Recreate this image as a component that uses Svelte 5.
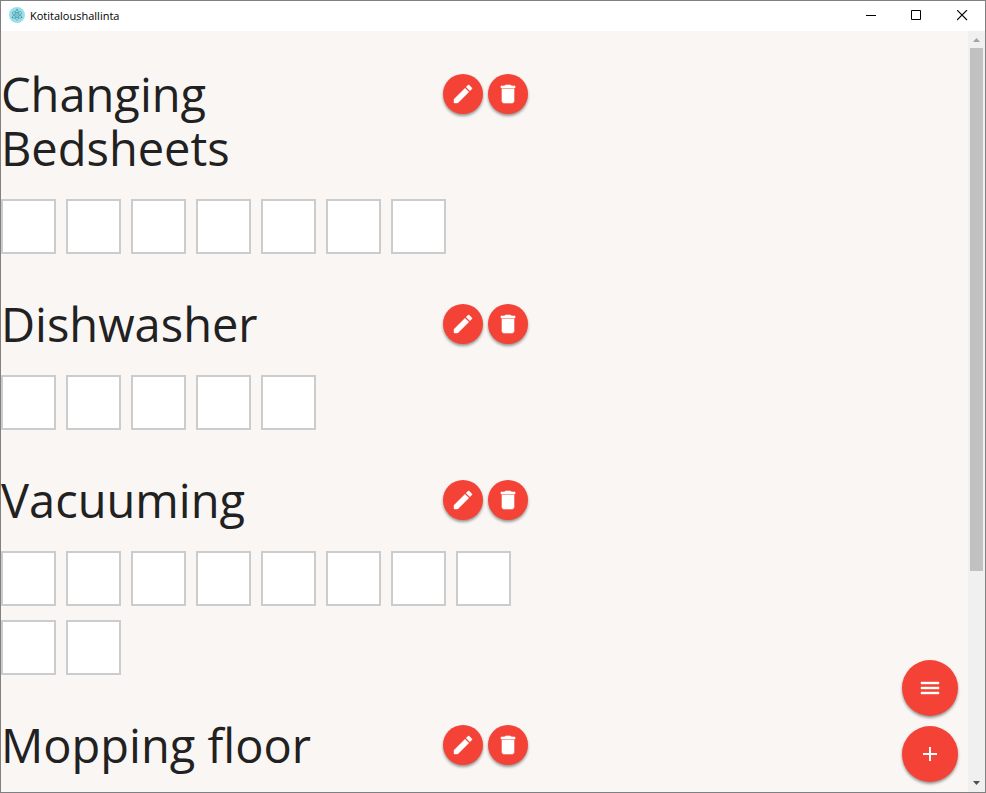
<script>
  const tasks = [
    { name: 'Changing Bedsheets', count: 7 },
    { name: 'Dishwasher', count: 5 },
    { name: 'Vacuuming', count: 10 },
    { name: 'Mopping floor', count: 6 }
  ];
</script>

<div class="window">
  <header class="titlebar">
    <svg class="logo" viewBox="0 0 16 17" width="16" height="17" aria-hidden="true">
      <circle cx="8" cy="8" r="8" fill="#98e1ec" />
      <g fill="none" stroke="#47848f" stroke-width="0.6" opacity="0.85">
        <ellipse cx="8" cy="8" rx="5.2" ry="2" transform="rotate(30 8 8)" />
        <ellipse cx="8" cy="8" rx="5.2" ry="2" transform="rotate(90 8 8)" />
        <ellipse cx="8" cy="8" rx="5.2" ry="2" transform="rotate(150 8 8)" />
      </g>
      <circle cx="8" cy="8" r="0.7" fill="#47848f" />
      <circle cx="3.4" cy="10.4" r="0.7" fill="#47848f" />
      <circle cx="12.6" cy="10.4" r="0.7" fill="#47848f" />
      <circle cx="8" cy="2.8" r="0.7" fill="#47848f" />
    </svg>
    <span class="caption">Kotitaloushallinta</span>
    <button class="control" aria-label="Minimize">
      <svg viewBox="0 0 11 11" width="11" height="11"><path d="M1 5.500h10" stroke="#000" /></svg>
    </button>
    <button class="control" aria-label="Maximize">
      <svg viewBox="0 0 11 11" width="11" height="11"><path d="M.5.5h9v9h-9z" fill="none" stroke="#000" /></svg>
    </button>
    <button class="control" aria-label="Close">
      <svg viewBox="0 0 11 11" width="11" height="11"><path d="M0 0l10 10M10 0l-10 10" stroke="#000" stroke-width="1.1" /></svg>
    </button>
  </header>

  <div class="body">
    <main class="content">
      {#each tasks as task}
        <section class="task">
          <div class="heading">
            <h2>{task.name}</h2>
            <div class="actions">
              <button class="fab small" aria-label="Edit {task.name}">
                <svg viewBox="0 0 24 24" width="24" height="24"><path d="M3 17.25V21h3.75L17.81 9.94l-3.75-3.75L3 17.25zM20.71 7.04c.39-.39.39-1.02 0-1.41l-2.34-2.34c-.39-.39-1.02-.39-1.41 0l-1.83 1.83 3.75 3.75 1.83-1.83z" stroke="#fff" stroke-width="0.4" /></svg>
              </button>
              <button class="fab small" aria-label="Delete {task.name}">
                <svg viewBox="0 0 24 24" width="24" height="24"><path d="M6 19c0 1.1.9 2 2 2h8c1.100 0 2-.9 2-2V7H6v12zM19 4h-3.500l-1-1h-5l-1 1H5v2h14V4z" stroke="#fff" stroke-width="0.6" /></svg>
              </button>
            </div>
          </div>
          <div class="boxes">
            {#each Array(task.count) as _, i}
              <input type="checkbox" aria-label="{task.name} {i + 1}" />
            {/each}
          </div>
        </section>
      {/each}
    </main>

    <div class="floating">
      <button class="fab" aria-label="Menu">
        <svg viewBox="0 0 24 24" width="24" height="24"><path d="M3 18h18v-2H3v2zm0-5h18v-2H3v2zm0-7v2h18V6H3z" stroke="#fff" stroke-width="0.4" /></svg>
      </button>
      <button class="fab" aria-label="Add">
        <svg viewBox="0 0 24 24" width="24" height="24"><path d="M19 13h-6v6h-2v-6H5v-2h6V5h2v6h6v2z" /></svg>
      </button>
    </div>

    <div class="scrollbar" aria-hidden="true">
      <svg class="arrow" viewBox="0 0 17 17" width="17" height="17"><path d="M5 11l3.500-4 3.500 4z" fill="#a3a3a3" /></svg>
      <div class="track"><div class="thumb"></div></div>
      <svg class="arrow" viewBox="0 0 17 17" width="17" height="17"><path d="M5 6h7l-3.500 4z" fill="#505050" /></svg>
    </div>
  </div>
</div>

<style>
  .window {
    box-sizing: border-box;
    display: flex;
    flex-direction: column;
    height: 100vh;
    overflow: hidden;
    border: 1px solid #808080;
    background: #faf6f4;
    color: #212121;
    font-family: 'Open Sans', 'Noto Sans', sans-serif;
  }

  button {
    padding: 0;
    border: 0;
    cursor: pointer;
  }

  svg {
    display: block;
  }

  .titlebar {
    display: flex;
    flex: none;
    align-items: center;
    height: 29px;
    padding: 0 0 1px 8px;
    background: #fff;
  }

  .caption {
    flex: 1;
    margin-left: 5px;
    color: #000;
    font-size: 11px;
    line-height: 15px;
  }

  .control {
    display: flex;
    align-items: center;
    justify-content: center;
    width: 46px;
    height: 29px;
    background: transparent;
  }

  .body {
    position: relative;
    display: flex;
    flex: 1;
    min-height: 0;
  }

  .content {
    flex: 1;
    padding-top: 36px;
    overflow: hidden;
  }

  .task {
    max-width: 527px;
    margin-bottom: 43px;
  }

  .heading {
    display: flex;
    align-items: flex-start;
    justify-content: space-between;
    margin-bottom: 24px;
  }

  h2 {
    flex: 1;
    margin: 0;
    font-size: 47px;
    font-weight: 400;
    font-variant-ligatures: none;
    line-height: 54px;
  }

  .actions {
    display: flex;
    gap: 5px;
    padding-top: 7px;
  }

  .boxes {
    display: flex;
    flex-wrap: wrap;
    gap: 14px 10px;
  }

  input {
    appearance: none;
    box-sizing: border-box;
    width: 55px;
    height: 55px;
    margin: 0;
    border: 2px solid #ccc;
    background: #fff;
  }

  input:checked {
    background: #f44336;
  }

  .fab {
    display: flex;
    align-items: center;
    justify-content: center;
    width: 56px;
    height: 56px;
    border-radius: 50%;
    background: #f44336;
    box-shadow: 0 2px 3px rgba(0, 0, 0, 0.4);
    fill: #fff;
  }

  .fab.small {
    width: 40px;
    height: 40px;
  }

  .floating {
    position: absolute;
    right: 27px;
    bottom: 10px;
    display: flex;
    flex-direction: column;
    gap: 10px;
  }

  .scrollbar {
    display: flex;
    flex: none;
    flex-direction: column;
    width: 17px;
    background: #f0f0f0;
  }

  .track {
    flex: 1;
    padding: 0 2px;
  }

  .thumb {
    height: 72%;
    background: #c1c1c1;
  }
</style>
